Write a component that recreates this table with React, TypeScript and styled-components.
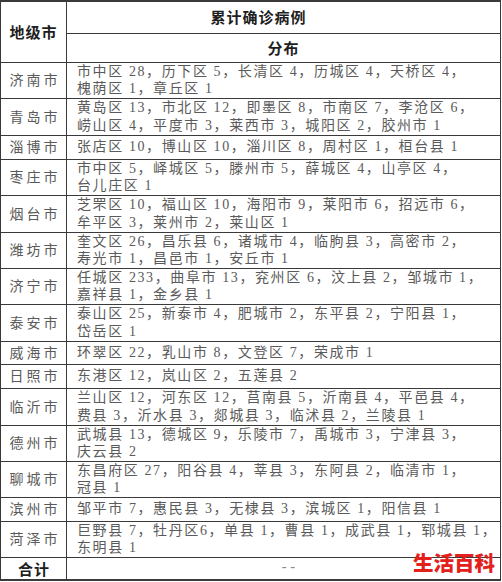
import styled, { createGlobalStyle } from "styled-components";

const GlobalStyle = createGlobalStyle`
  html, body {
    margin: 0;
    padding: 0;
    background: #ffffff;
  }
  body {
    font-family: "Liberation Serif", "Noto Sans CJK SC", serif;
  }
`;

const Page = styled.div`
  position: relative;
  width: 502px;
  height: 582px;
  overflow: hidden;
  background: #fff;
`;

const Table = styled.table`
  width: 501px;
  border-collapse: collapse;
  table-layout: fixed;
  border-top: 2px solid #3a3a3a;
  border-bottom: 2px solid #3a3a3a;
  border-left: 1px solid #3a3a3a;
  border-right: 1px solid #3a3a3a;
  color: #4e4e4e;
  font-size: 14px;
`;

const Row = styled.tr<{ $h: number }>`
  height: ${(p) => p.$h}px;
`;

const HeadCell = styled.th<{ $shift?: number }>`
  border: 1px solid #3a3a3a;
  padding: 0 ${(p) => (p.$shift ? p.$shift : 0)}px 0 0;
  font-family: "Noto Sans CJK SC", sans-serif;
  font-weight: 700;
  font-size: 15px;
  letter-spacing: 1px;
  color: #1e1e1e;
  text-align: center;
  vertical-align: middle;
  line-height: 18px;
`;

const CityCell = styled.td<{ $bold?: boolean }>`
  border: 1px solid #3a3a3a;
  padding: 0 0 0 ${(p) => (p.$bold ? 1 : 3)}px;
  font-family: "Noto Sans CJK SC", sans-serif;
  font-weight: ${(p) => (p.$bold ? 700 : 400)};
  font-size: ${(p) => (p.$bold ? 15 : 14)}px;
  letter-spacing: ${(p) => (p.$bold ? 1 : 3)}px;
  color: ${(p) => (p.$bold ? "#1e1e1e" : "#5a5a5a")};
  text-align: center;
  vertical-align: middle;
  line-height: 17.5px;
`;

const ListCell = styled.td<{ $center?: boolean }>`
  border: 1px solid #3a3a3a;
  padding: 0 0 0 10px;
  letter-spacing: 1.6px;
  line-height: 17.5px;
  color: #5a5a5a;
  text-align: ${(p) => (p.$center ? "center" : "left")};
  vertical-align: middle;
  white-space: nowrap;
`;

const Line = styled.div`
  white-space: nowrap;
`;

const Dash = styled.span`
  font-family: "Liberation Mono", monospace;
  letter-spacing: 0;
  color: #8a8a8a;
  font-size: 14px;
`;

const Watermark = styled.div`
  position: absolute;
  left: 413px;
  top: 551px;
  font-family: "Noto Sans CJK SC", sans-serif;
  font-weight: 900;
  font-size: 20.5px;
  line-height: 22px;
  color: #e3211c;
  letter-spacing: 0;
`;

type Entry = { city: string; h: number; lines: string[] };

const data: Entry[] = [
  { city: "济南市", h: 36, lines: ["市中区 28，历下区 5，长清区 4，历城区 4，天桥区 4，", "槐荫区 1，章丘区 1"] },
  { city: "青岛市", h: 37, lines: ["黄岛区 13，市北区 12，即墨区 8，市南区 7，李沧区 6，", "崂山区 4，平度市 3，莱西市 3，城阳区 2，胶州市 1"] },
  { city: "淄博市", h: 24, lines: ["张店区 10，博山区 10，淄川区 8，周村区 1，桓台县 1"] },
  { city: "枣庄市", h: 35, lines: ["市中区 5，峄城区 5，滕州市 5，薛城区 4，山亭区 4，", "台儿庄区 1"] },
  { city: "烟台市", h: 37, lines: ["芝罘区 10，福山区 10，海阳市 9，莱阳市 6，招远市 6，", "牟平区 3，莱州市 2，莱山区 1"] },
  { city: "潍坊市", h: 36, lines: ["奎文区 26，昌乐县 6，诸城市 4，临朐县 3，高密市 2，", "寿光市 1，昌邑市 1，安丘市 1"] },
  { city: "济宁市", h: 35, lines: ["任城区 233，曲阜市 13，兖州区 6，汶上县 2，邹城市 1，", "嘉祥县 1，金乡县 1"] },
  { city: "泰安市", h: 37, lines: ["泰山区 25，新泰市 4，肥城市 2，东平县 2，宁阳县 1，", "岱岳区 1"] },
  { city: "威海市", h: 23, lines: ["环翠区 22，乳山市 8，文登区 7，荣成市 1"] },
  { city: "日照市", h: 24, lines: ["东港区 12，岚山区 2，五莲县 2"] },
  { city: "临沂市", h: 37, lines: ["兰山区 12，河东区 12，莒南县 5，沂南县 4，平邑县 4，", "费县 3，沂水县 3，郯城县 3，临沭县 2，兰陵县 1"] },
  { city: "德州市", h: 35, lines: ["武城县 13，德城区 9，乐陵市 7，禹城市 3，宁津县 3，", "庆云县 2"] },
  { city: "聊城市", h: 35, lines: ["东昌府区 27，阳谷县 4，莘县 3，东阿县 2，临清市 1，", "冠县 1"] },
  { city: "滨州市", h: 24, lines: ["邹平市 7，惠民县 3，无棣县 3，滨城区 1，阳信县 1"] },
  { city: "菏泽市", h: 35, lines: ["巨野县 7，牡丹区6，单县 1，曹县 1，成武县 1，郓城县 1，", "东明县 1"] },
];

export default function App() {
  return (
    <Page>
      <GlobalStyle />
      <Table>
        <colgroup>
          <col style={{ width: 66 }} />
          <col />
        </colgroup>
        <tbody>
          <Row $h={32}>
            <HeadCell rowSpan={2}>地级市</HeadCell>
            <HeadCell $shift={50}>累计确诊病例</HeadCell>
          </Row>
          <Row $h={29}>
            <HeadCell>分布</HeadCell>
          </Row>
          {data.map((d) => (
            <Row key={d.city} $h={d.h}>
              <CityCell>{d.city}</CityCell>
              <ListCell>
                {d.lines.map((l) => (
                  <Line key={l}>{l}</Line>
                ))}
              </ListCell>
            </Row>
          ))}
          <Row $h={23}>
            <CityCell $bold>合计</CityCell>
            <ListCell $center>
              <Dash>--</Dash>
            </ListCell>
          </Row>
        </tbody>
      </Table>
      <Watermark>生活百科</Watermark>
    </Page>
  );
}
